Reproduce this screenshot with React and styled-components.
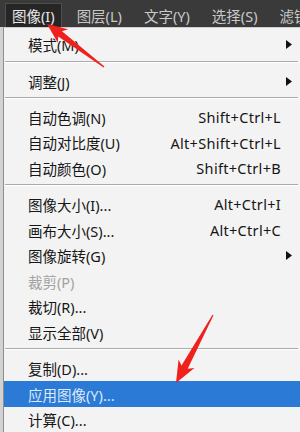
import React from "react";
import styled, { createGlobalStyle } from "styled-components";

const Global = createGlobalStyle`
  html, body { margin: 0; padding: 0; background: #d4d4d4; }
  body { font-family: "Noto Sans", "Noto Sans CJK SC", sans-serif; }
`;

const Page = styled.div`
  position: relative;
  width: 300px;
  height: 432px;
  overflow: hidden;
  background: #d2d2d2;
  display: flex;
  flex-direction: column;
`;

const MenuBar = styled.div`
  height: 27px;
  box-sizing: border-box;
  background: #3a3a3a;
  display: flex;
  align-items: flex-end;
  gap: 8px;
  padding-left: 5px;
  flex-shrink: 0;
`;

const Tab = styled.div`
  height: 24px;
  line-height: 24px;
  padding: 0 6px;
  box-sizing: border-box;
  font-size: 14.5px;
  white-space: nowrap;
  color: ${(p) => (p.$active ? "#e8e8e8" : "#c9c9c9")};
  background: ${(p) => (p.$active ? "#262626" : "transparent")};
  border: 1px solid ${(p) => (p.$active ? "#4e4e4e" : "transparent")};
  border-bottom: none;
`;

const Dropdown = styled.div`
  flex: 1;
  margin-left: 3px;
  border-left: 1px solid #8e8e8e;
  border-top: 1px solid #cfcfcf;
  background: #f3f3f3;
  padding-top: 4.2px;
  display: flex;
  flex-direction: column;
`;

const Row = styled.div`
  height: 25.6px;
  display: grid;
  grid-template-columns: 1fr auto 19px;
  align-items: center;
  padding-left: 24px;
  font-size: 14.5px;
  white-space: nowrap;
  color: ${(p) => (p.$disabled ? "#a2a2a2" : p.$selected ? "#dce9f8" : "#161616")};
  background: ${(p) => (p.$selected ? "#2a7ad6" : "transparent")};
`;

const Label = styled.span``;

const Shortcut = styled.span`
  text-align: right;
  font-size: 14.5px;
  letter-spacing: 0.3px;
`;

const ArrowCell = styled.span`
  display: flex;
  align-items: center;
  justify-content: center;
  padding-right: 4px;
`;

const Separator = styled.div`
  height: 10.5px;
  box-sizing: border-box;
  padding: 3px 2px 0 1px;
  &::before {
    content: "";
    display: block;
    height: 1px;
    background: #ababab;
    border-bottom: 1px solid #ffffff;
  }
`;

const Overlay = styled.svg`
  position: absolute;
  left: 0;
  top: 0;
  width: 300px;
  height: 432px;
  pointer-events: none;
`;

const SubArrow = () => (
  <svg width="6" height="9" viewBox="0 0 6 9">
    <polygon points="0,0 6,4.5 0,9" fill="#111" />
  </svg>
);

function arrowPoints(tip, tail, headLen, headHalf, shaftHalf, tailHalf) {
  const dx = tail[0] - tip[0];
  const dy = tail[1] - tip[1];
  const len = Math.hypot(dx, dy);
  const ux = dx / len;
  const uy = dy / len;
  const nx = -uy;
  const ny = ux;
  const at = (d, w) => [tip[0] + ux * d + nx * w, tip[1] + uy * d + ny * w];
  const pts = [
    tip,
    at(headLen, headHalf),
    at(headLen * 0.82, shaftHalf),
    at(len, tailHalf),
    at(len, -tailHalf),
    at(headLen * 0.82, -shaftHalf),
    at(headLen, -headHalf),
  ];
  return pts.map((p) => p.map((v) => v.toFixed(1)).join(",")).join(" ");
}

const tabs = ["图像(I)", "图层(L)", "文字(Y)", "选择(S)", "滤镜(T)"];

const menu = [
  { label: "模式(M)", sub: true },
  { sep: true },
  { label: "调整(J)", sub: true },
  { sep: true },
  { label: "自动色调(N)", key: "Shift+Ctrl+L" },
  { label: "自动对比度(U)", key: "Alt+Shift+Ctrl+L" },
  { label: "自动颜色(O)", key: "Shift+Ctrl+B" },
  { sep: true },
  { label: "图像大小(I)...", key: "Alt+Ctrl+I" },
  { label: "画布大小(S)...", key: "Alt+Ctrl+C" },
  { label: "图像旋转(G)", sub: true },
  { label: "裁剪(P)", disabled: true },
  { label: "裁切(R)..." },
  { label: "显示全部(V)" },
  { sep: true },
  { label: "复制(D)..." },
  { label: "应用图像(Y)...", selected: true },
  { label: "计算(C)..." },
];

export default function App() {
  return (
    <>
      <Global />
      <Page>
        <MenuBar>
          {tabs.map((t, i) => (
            <Tab key={t} $active={i === 0}>
              {t}
            </Tab>
          ))}
        </MenuBar>
        <Dropdown>
          {menu.map((m, i) =>
            m.sep ? (
              <Separator key={i} />
            ) : (
              <Row key={i} $disabled={m.disabled} $selected={m.selected}>
                <Label>{m.label}</Label>
                <Shortcut>{m.key || ""}</Shortcut>
                <ArrowCell>{m.sub ? <SubArrow /> : null}</ArrowCell>
              </Row>
            )
          )}
        </Dropdown>
        <Overlay viewBox="0 0 300 432">
          <polygon
            points={arrowPoints([47, 24], [104, 67], 20, 8.5, 3.2, 0.6)}
            fill="#f0201c"
          />
          <polygon
            points={arrowPoints([176, 383], [213, 315], 22, 9, 3.5, 0.6)}
            fill="#f0201c"
          />
        </Overlay>
      </Page>
    </>
  );
}
